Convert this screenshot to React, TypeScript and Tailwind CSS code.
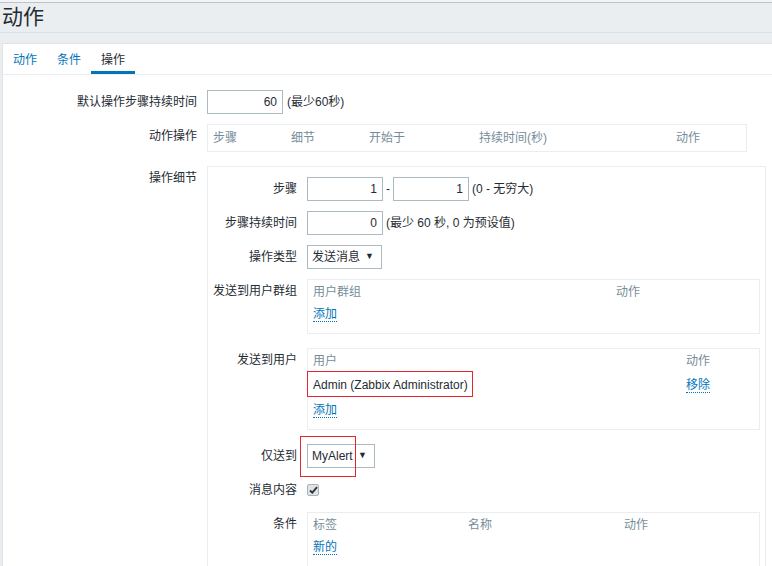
import * as React from 'react';

const font = { fontFamily: '"Liberation Sans", "Noto Sans CJK SC", sans-serif' };

const Label = ({ children, w }: { children: React.ReactNode; w: string }) => (
	<div className={`${w} shrink-0 text-right leading-[24px] text-[#1f2c33]`}>{children}</div>
);

const Input = ({ value }: { value: string }) => (
	<div className="w-[76px] h-[24px] border border-[#acbbc2] bg-white px-[5px] text-right leading-[22px] text-[#1f2c33]">
		{value}
	</div>
);

const Select = ({ value, w }: { value: string; w: string }) => (
	<div className={`${w} h-[24px] border border-[#acbbc2] bg-white pl-[4px] pr-[7px] flex items-center justify-between text-[#1f2c33]`}>
		<span>{value}</span>
		<span className="text-[9px]">▼</span>
	</div>
);

const Link = ({ children }: { children: React.ReactNode }) => (
	<span className="text-[#0275b8] border-b border-dotted border-[#0275b8] leading-[14px]">{children}</span>
);

const App = () => {
	return (
		<div style={font} className="relative w-[772px] h-[566px] overflow-hidden bg-[#ebeef0] text-[12px]">
			<div className="h-[2px] bg-[#f4f4f4]" />
			<div className="h-[1px] bg-[#bfc3c7]" />
			<div className="h-[29px] pl-[2px] text-[21px] leading-[28px] text-[#1f2c33]">动作</div>
			<div className="h-[1px] bg-[#dce1e4]" />
			<div className="h-[10px]" />
			<div className="ml-[2px] border-l border-t border-[#dfe4e7] bg-white h-[600px]">
				{/* tabs */}
				<div className="flex h-[31px] border-b border-[#ebeef0]">
					<div className="w-[44px] pl-[10px] pt-[7px] text-[#0275b8]">动作</div>
					<div className="w-[44px] pl-[10px] pt-[7px] text-[#0275b8]">条件</div>
					<div className="w-[44px] pl-[10px] pt-[7px] text-[#1f2c33] border-b-[3px] border-[#0275b8]">操作</div>
				</div>

				<div className="pt-[15px]">
					<div className="flex items-start gap-[10px]">
						<Label w="w-[194px]">默认操作步骤持续时间</Label>
						<Input value="60" />
						<span className="leading-[24px] ml-[-6px] text-[#1f2c33]">(最少60秒)</span>
					</div>

					<div className="flex items-start gap-[10px] mt-[10px]">
						<Label w="w-[194px]">动作操作</Label>
						<div className="w-[540px] h-[28px] border border-[#ebeef0] flex items-center pl-[5px] text-[#768d99]">
							<span className="w-[78px]">步骤</span>
							<span className="w-[78px]">细节</span>
							<span className="w-[110px]">开始于</span>
							<span className="w-[197px]">持续时间(秒)</span>
							<span>动作</span>
						</div>
					</div>

					<div className="flex items-start gap-[10px] mt-[14px]">
						<Label w="w-[194px]">操作细节</Label>
						<div className="w-[559px] border border-[#ebeef0] pt-[10px] pb-[20px] pr-[5px]">
							<div className="flex items-start gap-[10px]">
								<Label w="w-[89px]">步骤</Label>
								<Input value="1" />
								<span className="leading-[24px] ml-[-7px] text-[#1f2c33]">-</span>
								<div className="ml-[-7px]">
									<Input value="1" />
								</div>
								<span className="leading-[24px] ml-[-7px] text-[#1f2c33]">(0 - 无穷大)</span>
							</div>
							<div className="flex items-start gap-[10px] mt-[10px]">
								<Label w="w-[89px]">步骤持续时间</Label>
								<Input value="0" />
								<span className="leading-[24px] ml-[-7px] text-[#1f2c33]">(最少 60 秒, 0 为预设值)</span>
							</div>
							<div className="flex items-start gap-[10px] mt-[10px]">
								<Label w="w-[89px]">操作类型</Label>
								<Select value="发送消息" w="w-[75px]" />
							</div>
							<div className="flex items-start gap-[10px] mt-[10px]">
								<Label w="w-[89px]">发送到用户群组</Label>
								<div className="flex-1 h-[55px] border border-[#ebeef0] pl-[5px]">
									<div className="flex h-[23px] items-center text-[#768d99]">
										<span className="w-[303px]">用户群组</span>
										<span>动作</span>
									</div>
									<div className="flex h-[22px] items-center">
										<Link>添加</Link>
									</div>
								</div>
							</div>
							<div className="flex items-start gap-[10px] mt-[14px]">
								<Label w="w-[89px]">发送到用户</Label>
								<div className="flex-1 h-[82px] border border-[#ebeef0] pl-[5px]">
									<div className="flex h-[23px] items-center text-[#768d99]">
										<span className="w-[373px]">用户</span>
										<span>动作</span>
									</div>
									<div className="flex h-[26px] items-center text-[#1f2c33]">
										<span className="w-[373px]">Admin (Zabbix Administrator)</span>
										<Link>移除</Link>
									</div>
									<div className="flex h-[24px] items-center">
										<Link>添加</Link>
									</div>
								</div>
							</div>
							<div className="flex items-start gap-[10px] mt-[14px]">
								<Label w="w-[89px]">仅送到</Label>
								<Select value="MyAlert" w="w-[68px]" />
							</div>
							<div className="flex items-start gap-[10px] mt-[10px]">
								<Label w="w-[89px]">消息内容</Label>
								<div className="h-[24px] flex items-center">
									<div className="w-[12px] h-[12px] rounded-[2px] border border-[#a9b3b8] bg-[#dfe3e5] flex items-center justify-center">
										<svg width="9" height="8" viewBox="0 0 9 8">
											<path d="M1 4.5 L3.3 6.7 L8 1.2" fill="none" stroke="#2b3338" strokeWidth="1.8" />
										</svg>
									</div>
								</div>
							</div>
							<div className="flex items-start gap-[10px] mt-[10px]">
								<Label w="w-[89px]">条件</Label>
								<div className="flex-1 h-[60px] border border-[#ebeef0] pl-[5px]">
									<div className="flex h-[23px] items-center text-[#768d99]">
										<span className="w-[155px]">标签</span>
										<span className="w-[156px]">名称</span>
										<span>动作</span>
									</div>
									<div className="flex h-[23px] items-center">
										<Link>新的</Link>
									</div>
								</div>
							</div>
						</div>
					</div>
				</div>
			</div>

			{/* annotation overlays */}
			<div className="absolute left-[307px] top-[371px] w-[166px] h-[26px] border border-[#e5262d]" />
			<div className="absolute left-[300px] top-[436px] w-[56px] h-[41px] border border-[#e5262d]" />
		</div>
	);
};

export default App;
